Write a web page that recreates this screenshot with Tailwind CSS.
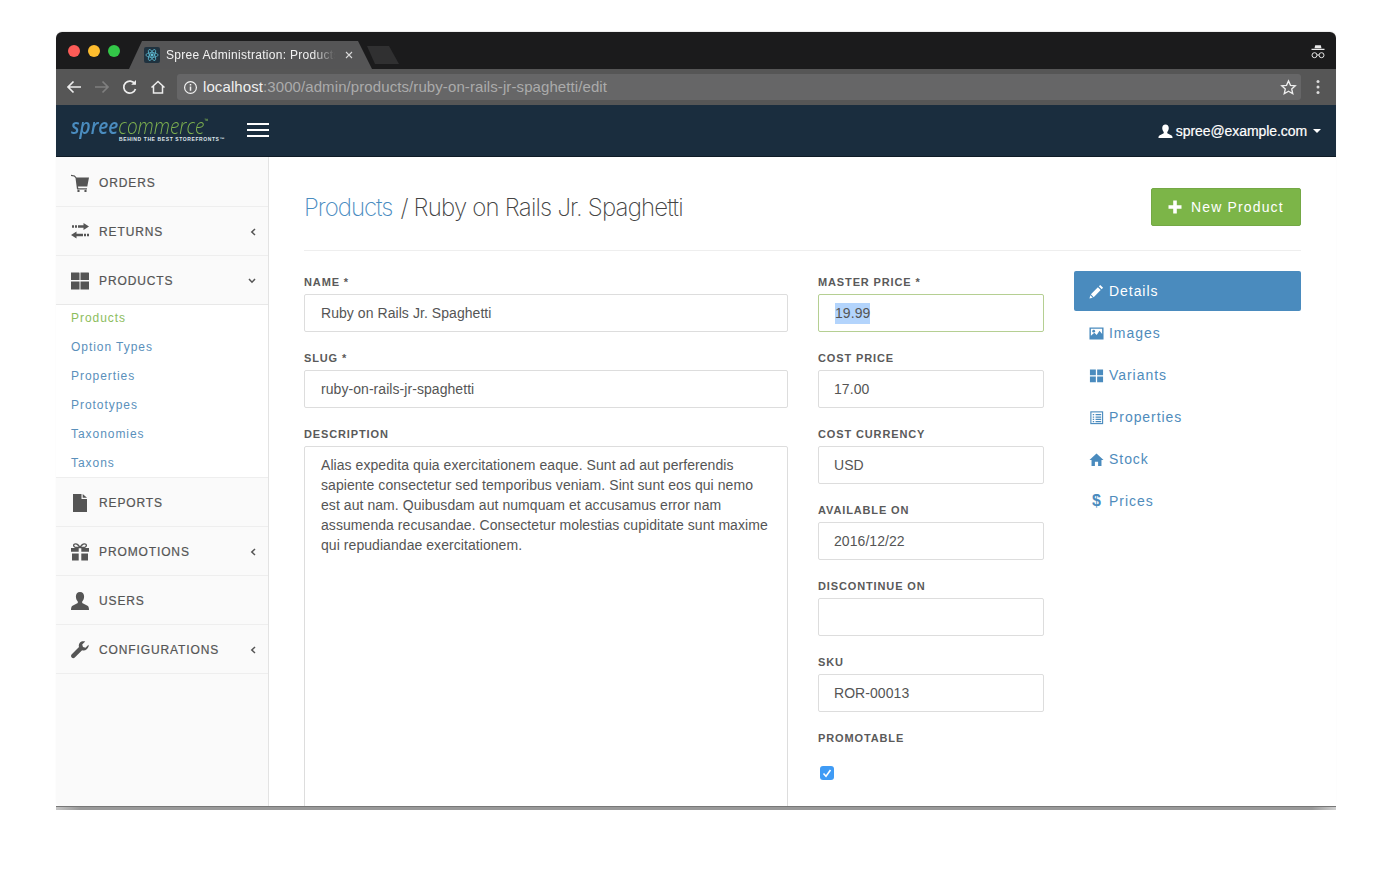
<!DOCTYPE html>
<html lang="en">
<head>
<meta charset="utf-8">
<title>Spree Administration: Products</title>
<script src="https://cdn.jsdelivr.net/npm/@tailwindcss/browser@4"></script>
</head>
<body class="bg-white font-['Liberation_Sans',Arial,sans-serif]">
<div class="w-[1392px] h-[886px] pt-[32px] px-[56px] overflow-hidden">
  <div class="w-[1280px] h-[774px] flex flex-col rounded-t-[6px] rounded-b-[4px] overflow-hidden bg-white shadow-[0_-1px_1px_rgba(0,0,0,0.08)]">
    <!-- title bar -->
    <div class="h-[37px] shrink-0 bg-[#1b1b1c] flex items-end relative">
      <div class="absolute left-[12px] top-[13px] flex gap-[8px]">
        <span class="size-[12px] rounded-full bg-[#fc5b57]"></span>
        <span class="size-[12px] rounded-full bg-[#fdbc2e]"></span>
        <span class="size-[12px] rounded-full bg-[#33c748]"></span>
      </div>
      <div class="ml-[73px] w-[243px] h-[28px] bg-[#555556] [clip-path:polygon(0_100%,13px_0,229px_0,243px_100%)] flex items-center pl-[15px] relative">
        <span class="size-[16px] rounded-[2px] bg-[#20323f] flex items-center justify-center shrink-0">
          <svg viewBox="0 0 16 16" class="size-[14px]" fill="none" stroke="#63c5de" stroke-width="0.8"><ellipse cx="8" cy="8" rx="7" ry="2.7"/><ellipse cx="8" cy="8" rx="7" ry="2.7" transform="rotate(60 8 8)"/><ellipse cx="8" cy="8" rx="7" ry="2.7" transform="rotate(120 8 8)"/><circle cx="8" cy="8" r="1.3" fill="#63c5de"/></svg>
        </span>
        <span class="ml-[6px] w-[171px] overflow-hidden whitespace-nowrap text-[12px] tracking-[0.3px] text-[#f2f2f2] [mask-image:linear-gradient(to_right,#000_86%,transparent_99%)]">Spree Administration: Products</span>
        <svg viewBox="0 0 8 8" class="size-[8px] ml-[8px] shrink-0" stroke="#d8d8d8" stroke-width="1.1"><path d="M1 1l6 6M7 1l-6 6"/></svg>
      </div>
      <div class="ml-[-5px] mb-[5px] w-[32px] h-[18px] bg-[#303031] [clip-path:polygon(0_0,22px_0,32px_100%,8px_100%)]"></div>
      <svg viewBox="0 0 16 16" class="absolute right-[10px] top-[12px] size-[16px]" fill="none" stroke="#e8e8e8"><path d="M5.2 1.2h5.6l.7 3H4.500z" fill="#e8e8e8" stroke="none"/><path d="M1.500 5.400h13" stroke-width="1.300"/><circle cx="4.500" cy="11.200" r="2.500"/><circle cx="11.500" cy="11.200" r="2.500"/><path d="M7 11h2"/></svg>
    </div>
    <!-- toolbar -->
    <div class="h-[36px] shrink-0 bg-[#565656] flex items-center pl-[9px] pr-[35px] relative">
      <div class="flex items-center gap-[10px] w-[112px] shrink-0">
        <svg viewBox="0 0 18 18" class="size-[18px]" fill="none" stroke="#ececec" stroke-width="1.700"><path d="M16 9H3M8.500 3.500L3 9l5.500 5.500"/></svg>
        <svg viewBox="0 0 18 18" class="size-[18px]" fill="none" stroke="#7f7f7f" stroke-width="1.700"><path d="M2 9h13M9.500 3.500L15 9l-5.500 5.500"/></svg>
        <svg viewBox="0 0 18 18" class="size-[18px]" fill="none" stroke="#ececec" stroke-width="1.700"><path d="M14.500 11a6 6 0 1 1-.6-5"/><path d="M15 2v4.800h-4.800" fill="#ececec" stroke="none"/></svg>
        <svg viewBox="0 0 18 18" class="size-[18px]" fill="none" stroke="#ececec" stroke-width="1.500"><path d="M2.500 9.500L9 3.500l6.500 6M4.500 8v7h9V8"/></svg>
      </div>
      <div class="flex-1 h-[26px] rounded-[3px] bg-[#666667] flex items-center pl-[6px] pr-[4px]">
        <svg viewBox="0 0 16 16" class="size-[15px] shrink-0" fill="none" stroke="#f0f0f0" stroke-width="1.300"><circle cx="8" cy="8" r="6.300"/><path d="M8 7v4.500M8 4.300v1.500" stroke-width="1.600"/></svg>
        <span class="ml-[5px] text-[15px] tracking-[0.09px] text-[#efefef] whitespace-nowrap">localhost<span class="text-[#ababab]">:3000/admin/products/ruby-on-rails-jr-spaghetti/edit</span></span>
        <svg viewBox="0 0 18 18" class="size-[17px] ml-auto" fill="none" stroke="#eeeeee" stroke-width="1.400"><path d="M9 2l2.100 4.700 5.100.5-3.800 3.400 1.100 5L9 13l-4.500 2.600 1.100-5L1.800 7.200l5.100-.5z"/></svg>
      </div>
      <svg viewBox="0 0 4 16" class="absolute right-[16px] top-[10px] w-[4px] h-[16px]" fill="#dcdcdc"><circle cx="2" cy="2.500" r="1.500"/><circle cx="2" cy="8" r="1.500"/><circle cx="2" cy="13.500" r="1.500"/></svg>
    </div>
    <!-- app navbar -->
    <div class="h-[52px] shrink-0 bg-[#1a2d3e] border-b border-[#0f1b26] flex items-center pl-[15px] pr-[15px]">
      <div class="w-[176px] shrink-0 flex flex-col mt-[-5px]">
        <div class="h-[20px] flex items-baseline italic text-[22px] leading-[20px] font-['Open_Sans',sans-serif] whitespace-nowrap origin-left scale-x-[0.86]">
          <span class="text-[#4a8cbf] font-semibold">spree</span><span class="text-[#7fb24f] font-light">commerce</span><span class="text-[6px] text-[#7fb24f] self-start leading-[12px]">™</span>
        </div>
        <div class="ml-[48px] mt-[1px] text-[5px] leading-[6px] font-bold tracking-[0.6px] text-[#dfe5ea] whitespace-nowrap">BEHIND THE BEST STOREFRONTS™</div>
      </div>
      <div class="w-[22px] flex flex-col gap-[4px] mt-[-1px]">
        <span class="h-[2px] bg-white"></span><span class="h-[2px] bg-white"></span><span class="h-[2px] bg-white"></span>
      </div>
      <div class="ml-auto mt-[1px] flex items-center text-white text-[14px] tracking-[-0.08px] [-webkit-text-stroke:0.2px_#fff]">
        <svg viewBox="0 0 16 16" class="size-[15px] mr-[3px]" fill="#fff"><path d="M8 .5c2.300 0 3.500 1.700 3.500 3.800 0 1.800-.8 3.400-1.600 4.200v1.300l4.600 2.400c.8.500 1 1.300 1 2.800H.5c0-1.500.2-2.300 1-2.800l4.600-2.400V8.500C5.300 7.700 4.500 6.100 4.500 4.300 4.500 2.200 5.700.5 8 .5z"/></svg>
        <span>spree@example.com</span>
        <span class="ml-[6px] w-0 h-0 border-x-[4px] border-x-transparent border-t-[4px] border-t-white"></span>
      </div>
    </div>
    <!-- body -->
    <div class="flex-1 min-h-0 flex">
      <!-- sidebar -->
      <aside class="w-[213px] shrink-0 bg-[#fafafa] border-r border-[#e3e3e3] pt-[1px] text-[12px] tracking-[0.88px] text-[#555] [-webkit-text-stroke:0.2px_#555]">
        <div class="h-[49px] pt-[1px] border-b border-[#eeeeee] flex items-center pl-[15px] pr-[12px]">
          <svg viewBox="0 0 18 18" class="size-[18px] mr-[10px]" fill="#555"><path d="M0 .8L3.800 1.500 5.500 3.500H18L16.300 12.500H7L7.300 14.300H16V15.500H6L4.500 4 3 2.500 0 2z"/><circle cx="7.500" cy="17" r="1.200"/><circle cx="14.500" cy="17" r="1.200"/></svg>
          <span>ORDERS</span>
        </div>
        <div class="h-[49px] pt-[1px] border-b border-[#eeeeee] flex items-center pl-[15px] pr-[12px]">
          <svg viewBox="0 0 18 18" class="size-[18px] mr-[10px]" fill="#555"><path d="M1 2.300h2v2.400H1zM4 2.300h2v2.400H4zM7 2.300h5.500V0L18 3.500 12.500 7V4.700H7zM18 10.800h-2v2.400h2zM15 10.800h-2v2.400h2zM12 10.800H5.500V8.500L0 12l5.500 3.500V13.200H12z"/></svg>
          <span>RETURNS</span>
          <svg viewBox="0 0 6 8" class="w-[6px] h-[8px] ml-auto" fill="none" stroke="#555" stroke-width="1.500"><path d="M5 1L1.800 4 5 7"/></svg>
        </div>
        <div class="h-[49px] pt-[1px] border-b border-[#e8e8e8] flex items-center pl-[15px] pr-[12px]">
          <svg viewBox="0 0 18 18" class="size-[18px] mr-[10px]" fill="#555"><path d="M0 .5h8c.3 0 .5.200.5.500v7H0zM9.500.5h8c.3 0 .5.200.5.500v7H9.500zM0 9.500h8.500V17.500H0zM9.500 9.500H18V17.500H9.500z"/></svg>
          <span>PRODUCTS</span>
          <svg viewBox="0 0 8 6" class="w-[8px] h-[6px] ml-auto" fill="none" stroke="#555" stroke-width="1.500"><path d="M1 1l3 3.200L7 1"/></svg>
        </div>
        <div class="h-[172px] bg-white flex flex-col pl-[15px] text-[#5a90bb] tracking-[0.95px] leading-[29px] [-webkit-text-stroke:0]">
          <span class="mt-[-1px] text-[#8cbd5d]">Products</span>
          <span>Option Types</span>
          <span>Properties</span>
          <span>Prototypes</span>
          <span>Taxonomies</span>
          <span>Taxons</span>
        </div>
        <div class="h-[50px] pt-[1px] border-y border-[#eeeeee] flex items-center pl-[15px] pr-[12px]">
          <svg viewBox="0 0 18 18" class="size-[18px] mr-[10px]" fill="#555"><path d="M2 0h8.500v5H16v13H2zM11.700 0L16 3.800h-4.300z"/></svg>
          <span>REPORTS</span>
        </div>
        <div class="h-[49px] pt-[1px] border-b border-[#eeeeee] flex items-center pl-[15px] pr-[12px]">
          <svg viewBox="0 0 18 18" class="size-[18px] mr-[10px]" fill="#555"><path d="M1 17.500h6.700v-7H1zM10.300 17.500H17v-7h-6.700zM0 5h7.700v3.800H0zM10.300 5H18v3.800h-7.700z"/><path d="M9 4.500C7 1 4.500.2 3.200 1.300 2 2.400 3 4.500 5.500 4.500zM9 4.500c2-3.500 4.500-4.300 5.800-3.200 1.200 1.100.2 3.200-2.300 3.200z" fill="none" stroke="#555" stroke-width="1.300"/></svg>
          <span>PROMOTIONS</span>
          <svg viewBox="0 0 6 8" class="w-[6px] h-[8px] ml-auto" fill="none" stroke="#555" stroke-width="1.500"><path d="M5 1L1.800 4 5 7"/></svg>
        </div>
        <div class="h-[49px] pt-[1px] border-b border-[#eeeeee] flex items-center pl-[15px] pr-[12px]">
          <svg viewBox="0 0 18 18" class="size-[18px] mr-[10px]" fill="#555"><path d="M9 0c2.700 0 4.100 2 4.100 4.500 0 2.100-.9 4-1.900 5v1.500l5.300 2.800c1 .5 1.500 2 1.500 4.200H0c0-2.200.5-3.700 1.500-4.200L6.800 11V9.500c-1-1-1.900-2.900-1.900-5C4.900 2 6.300 0 9 0z"/></svg>
          <span>USERS</span>
        </div>
        <div class="h-[49px] pt-[1px] border-b border-[#eeeeee] flex items-center pl-[15px] pr-[12px]">
          <svg viewBox="0 0 18 18" class="size-[18px] mr-[10px]" fill="#555"><path d="M17.500 3.800l-3 3-2.500-.8-.8-2.500 3-3c-2-.7-4-.2-5.200 1-1.200 1.300-1.500 3-1 4.600L.8 13.300c-1 1-1 2.200-.1 3.200.9.900 2.200.9 3.100 0l7.300-7.200c1.600.5 3.300.2 4.600-1 1.200-1.300 2.400-2.500 1.800-4.500z"/></svg>
          <span>CONFIGURATIONS</span>
          <svg viewBox="0 0 6 8" class="w-[6px] h-[8px] ml-auto" fill="none" stroke="#555" stroke-width="1.500"><path d="M5 1L1.800 4 5 7"/></svg>
        </div>
      </aside>
      <!-- main -->
      <main class="flex-1 min-w-0 overflow-hidden pl-[35px] pr-[35px] pt-[31px]">
        <header class="h-[63px] border-b border-[#eeeeee] flex items-start justify-between">
          <h1 class="h-[40px] flex items-center text-[24px] font-extralight font-['Inter',sans-serif] text-[#444] whitespace-nowrap"><span class="text-[#4a8cbf] tracking-[-1px]">Products</span><span class="ml-[8px] tracking-[-0.8px]">/ Ruby on Rails Jr. Spaghetti</span></h1>
          <div class="w-[150px] h-[38px] rounded-[2px] bg-[#7cb548] border border-[#74a845] flex items-center pl-[16px] text-white text-[14px] tracking-[1.15px]">
            <svg viewBox="0 0 14 14" class="size-[14px] mr-[9px]" fill="#fff"><path d="M5.200.5h3.600v4.700h4.700v3.600H8.800v4.700H5.200V8.800H.5V5.200h4.700z"/></svg>
            New Product
          </div>
        </header>
        <div class="flex gap-[30px] pt-[20px] text-[14px] tracking-[0.06px] text-[#555]">
          <div class="w-[484px] shrink-0 pt-[5px]">
            <div class="h-[18px] text-[11px] font-bold tracking-[0.87px] leading-[12px] text-[#5a5a5a]">NAME *</div>
            <div class="h-[38px] mb-[20px] px-[16px] flex items-center border border-[#dddddd] rounded-[2px]">Ruby on Rails Jr. Spaghetti</div>
            <div class="h-[18px] text-[11px] font-bold tracking-[0.87px] leading-[12px] text-[#5a5a5a]">SLUG *</div>
            <div class="h-[38px] mb-[20px] px-[16px] flex items-center border border-[#dddddd] rounded-[2px]">ruby-on-rails-jr-spaghetti</div>
            <div class="h-[18px] text-[11px] font-bold tracking-[0.87px] leading-[12px] text-[#5a5a5a]">DESCRIPTION</div>
            <div class="h-[500px] px-[16px] py-[8px] border border-[#dddddd] rounded-[2px] leading-[20px]">Alias expedita quia exercitationem eaque. Sunt ad aut perferendis<br>sapiente consectetur sed temporibus veniam. Sint sunt eos qui nemo<br>est aut nam. Quibusdam aut numquam et accusamus error nam<br>assumenda recusandae. Consectetur molestias cupiditate sunt maxime<br>qui repudiandae exercitationem.</div>
          </div>
          <div class="w-[226px] shrink-0 pt-[5px]">
            <div class="h-[18px] text-[11px] font-bold tracking-[0.87px] leading-[12px] text-[#5a5a5a]">MASTER PRICE *</div>
            <div class="h-[38px] mb-[20px] px-[16px] flex items-center border border-[#b5cf92] rounded-[2px]"><span class="bg-[#b3d4fc]">19.99</span></div>
            <div class="h-[18px] text-[11px] font-bold tracking-[0.87px] leading-[12px] text-[#5a5a5a]">COST PRICE</div>
            <div class="h-[38px] mb-[20px] px-[15px] flex items-center border border-[#dddddd] rounded-[2px]">17.00</div>
            <div class="h-[18px] text-[11px] font-bold tracking-[0.87px] leading-[12px] text-[#5a5a5a]">COST CURRENCY</div>
            <div class="h-[38px] mb-[20px] px-[15px] flex items-center border border-[#dddddd] rounded-[2px]">USD</div>
            <div class="h-[18px] text-[11px] font-bold tracking-[0.87px] leading-[12px] text-[#5a5a5a]">AVAILABLE ON</div>
            <div class="h-[38px] mb-[20px] px-[15px] flex items-center border border-[#dddddd] rounded-[2px]">2016/12/22</div>
            <div class="h-[18px] text-[11px] font-bold tracking-[0.87px] leading-[12px] text-[#5a5a5a]">DISCONTINUE ON</div>
            <div class="h-[38px] mb-[20px] px-[15px] flex items-center border border-[#dddddd] rounded-[2px]"></div>
            <div class="h-[18px] text-[11px] font-bold tracking-[0.87px] leading-[12px] text-[#5a5a5a]">SKU</div>
            <div class="h-[38px] mb-[20px] px-[15px] flex items-center border border-[#dddddd] rounded-[2px]">ROR-00013</div>
            <div class="h-[18px] text-[11px] font-bold tracking-[0.87px] leading-[12px] text-[#5a5a5a]">PROMOTABLE</div>
            <span class="mt-[16px] ml-[2px] size-[14px] rounded-[3px] bg-[#3f9bf5] flex items-center justify-center">
              <svg viewBox="0 0 14 14" class="size-[14px]" fill="none" stroke="#fff" stroke-width="1.600"><path d="M3.500 7.500l2.500 2.700 4.500-6.200"/></svg>
            </span>
          </div>
          <nav class="w-[227px] shrink-0 flex flex-col gap-[2px] text-[#4f8cbc] tracking-[0.95px]">
            <div class="h-[40px] rounded-[2px] bg-[#4a8bbe] text-white flex items-center pl-[15px]">
              <svg viewBox="0 0 16 16" class="size-[15px] mr-[5px]" fill="#fff"><path d="M12 1l3 3-1.500 1.500-3-3zM9.500 3.500l3 3L5 14l-3-3zM1.400 12l2.600 2.600L.5 15.500z"/></svg>Details
            </div>
            <div class="h-[40px] flex items-center pl-[15px]">
              <svg viewBox="0 0 16 16" class="size-[15px] mr-[5px]" fill="#4a8bbe"><path fill-rule="evenodd" d="M.5 1.500h15v13H.5zM2 3v7.500l3.700-3.300 2.500 2.300 3-4.500L14 8.500V3z"/><circle cx="5" cy="5.500" r="1.500"/></svg>Images
            </div>
            <div class="h-[40px] flex items-center pl-[15px]">
              <svg viewBox="0 0 16 16" class="size-[15px] mr-[5px]" fill="#4a8bbe"><path d="M1 1.500h6.300v6.200H1zM8.700 1.500H15v6.200H8.700zM1 9.100h6.300v6.200H1zM8.700 9.100H15v6.200H8.700z"/></svg>Variants
            </div>
            <div class="h-[40px] flex items-center pl-[15px]">
              <svg viewBox="0 0 16 16" class="size-[15px] mr-[5px]" fill="none" stroke="#4a8bbe"><rect x="2" y="2" width="12.500" height="12.500" stroke-width="1.200"/><path d="M4 5h1.500M7 5h6M4 7.500h1.500M7 7.500h6M4 10h1.500M7 10h6M4 12.500h1.500M7 12.500h6" stroke-width="1.300"/></svg>Properties
            </div>
            <div class="h-[40px] flex items-center pl-[15px]">
              <svg viewBox="0 0 16 16" class="size-[15px] mr-[5px]" fill="#4a8bbe"><path d="M8 1.500L15.500 8.500H13.300V15H9.700V10.500H6.300V15H2.700V8.500H.5z"/></svg>Stock
            </div>
            <div class="h-[40px] flex items-center pl-[15px]">
              <span class="w-[15px] mr-[5px] text-center text-[16px] font-bold tracking-normal text-[#4a8bbe]">$</span>Prices
            </div>
          </nav>
        </div>
      </main>
    </div>
  </div>
  <div class="h-[4px] w-[1280px] bg-[linear-gradient(to_right,#c4c4c4,#999_24px,#999_calc(100%-24px),#cfcfcf)] border-t border-[#777]"></div>
</div>
</body>
</html>
